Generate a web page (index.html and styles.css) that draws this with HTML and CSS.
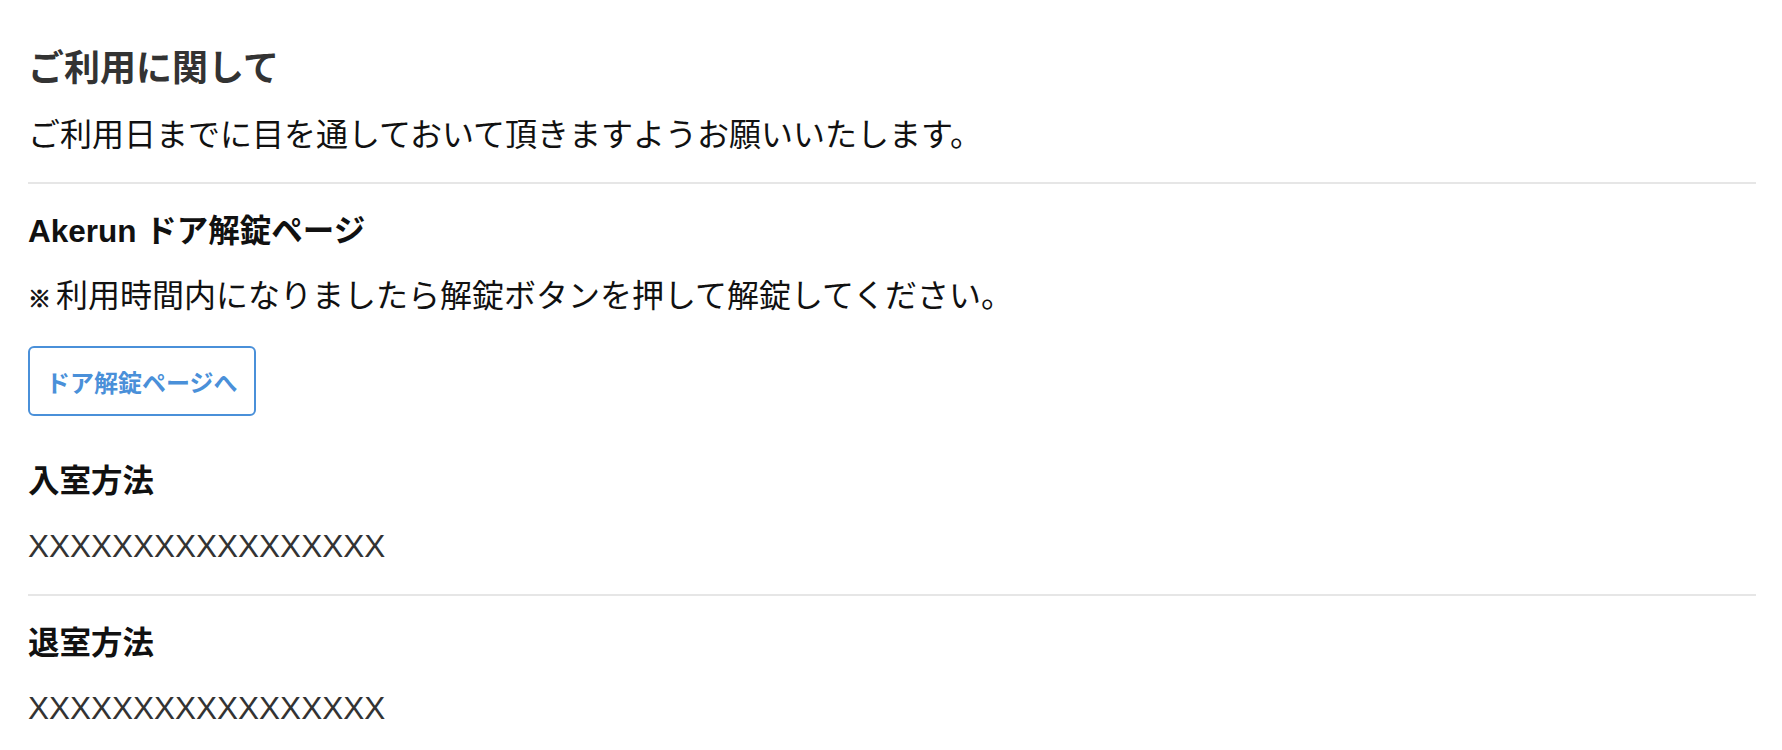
FILE: index.html
```html
<!DOCTYPE html>
<html lang="ja">
<head>
  <meta charset="UTF-8">
  <title>ご利用に関して</title>
  <link rel="stylesheet" href="styles.css">
</head>
<body>
  <div class="page">
    <section class="block intro">
      <h1 class="title">ご利用に関して</h1>
      <p class="lead">ご利用日までに目を通しておいて頂きますようお願いいたします。</p>
    </section>
    <section class="block">
      <h2 class="item-title">Akerun ドア解錠ページ</h2>
      <p class="lead"><span class="mark">※</span>利用時間内になりましたら解錠ボタンを押して解錠してください。</p>
      <a class="btn-outline" href="#">ドア解錠ページへ</a>
      <h2 class="item-title spaced">入室方法</h2>
      <p class="value">XXXXXXXXXXXXXXXXX</p>
    </section>
    <section class="block">
      <h2 class="item-title">退室方法</h2>
      <p class="value">XXXXXXXXXXXXXXXXX</p>
    </section>
  </div>
</body>
</html>
```

FILE: styles.css
```css
body {
  margin: 0;
  background: #fff;
  font-family: 'Liberation Sans', 'Noto Sans CJK JP', sans-serif;
  color: #111;
}
.page {
  padding: 22px 26px 0 28px;
}
.block {
  padding: 23px 0 24px;
}
.block.intro {
  padding-bottom: 23px;
}
.block + .block {
  border-top: 2px solid #e6e6e6;
}
.title {
  margin: 0 0 18px;
  font-size: 36px;
  line-height: 48px;
  font-weight: bold;
  color: #333;
}
.item-title {
  margin: 0 0 17px;
  font-size: 31.5px;
  line-height: 48px;
  font-weight: bold;
  color: #111;
}
.item-title.spaced {
  margin-top: 41px;
}
.lead, .value {
  margin: 0;
  font-size: 32px;
  line-height: 48px;
}
.lead { color: #111; }
.value { color: #333; font-size: 31.5px; }
.mark {
  margin-right: 5px;
  font-size: 23px;
  font-weight: bold;
  -webkit-text-stroke: 0.8px #111;
}
/* outline button */
.btn-outline {
  display: inline-flex;
  align-items: center;
  box-sizing: border-box;
  height: 70px;
  margin-top: 23px;
  padding: 0 16px;
  border: 2px solid #4a90d9;
  border-radius: 6px;
  color: #4a90d9;
  font-size: 24px;
  font-weight: bold;
  text-decoration: none;
}
```
